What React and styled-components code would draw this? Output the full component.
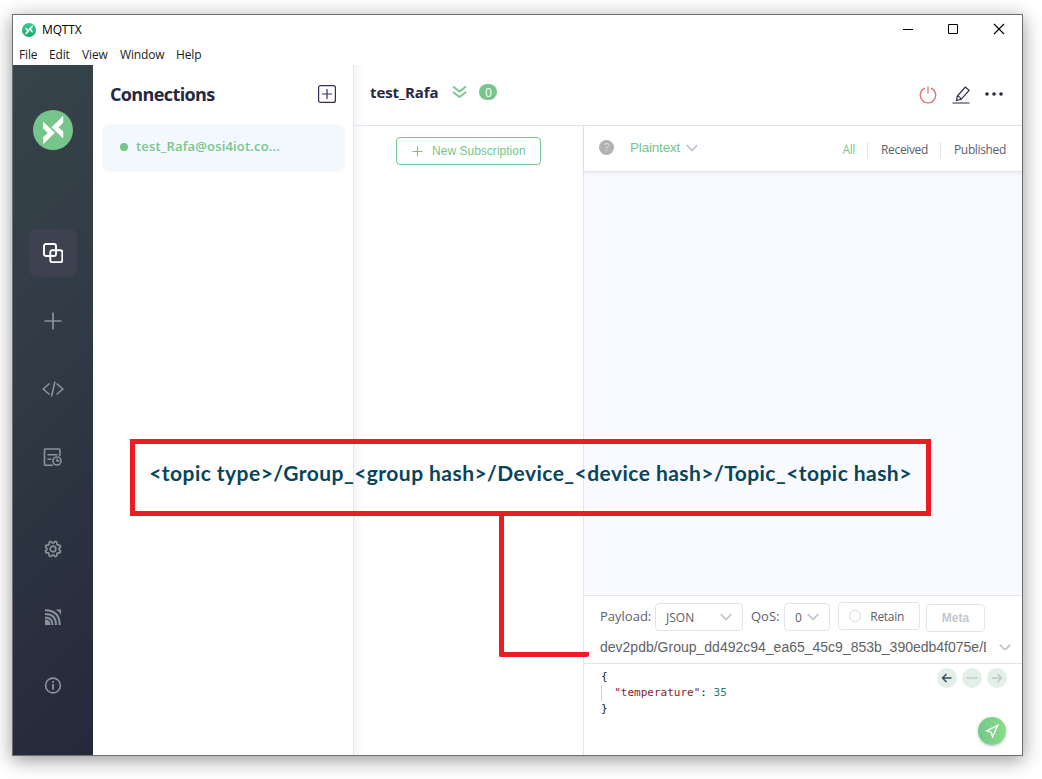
import React from 'react';
import styled, { createGlobalStyle } from 'styled-components';

const GlobalStyle = createGlobalStyle`
  * { box-sizing: border-box; }
  body { margin: 0; background: #fff; font-family: "Open Sans", "Noto Sans", sans-serif; overflow: hidden; }
  svg { display: block; flex: none; }
`;

const green = '#76c68c';
const line = '#e4e5ec';

const Desktop = styled.div`
  width: 1042px;
  height: 779px;
  padding: 14px 19px 23px 12px;
  background: #fff;
`;
const Window = styled.div`
  position: relative;
  width: 1011px;
  height: 742px;
  display: flex;
  flex-direction: column;
  border: 1px solid #6d6e70;
  background: #fff;
  box-shadow: 0 4px 18px rgba(0, 0, 0, 0.42);
`;
const TitleBar = styled.div`
  height: 29px;
  display: flex;
  align-items: center;
  padding: 0 17px 0 9px;
`;
const AppName = styled.span`
  flex: 1;
  margin-left: 6px;
  font-size: 12px;
  letter-spacing: -0.15px;
  color: #000;
`;
const WindowButtons = styled.div`
  display: flex;
  gap: 34px;
  margin-bottom: 2px;
`;
const MenuBar = styled.div`
  height: 21px;
  display: flex;
  align-items: center;
  gap: 12px;
  padding-left: 6px;
  font-size: 12px;
  line-height: 21px;
  color: #1c1c1c;
`;
const MenuItem = styled.span`
  width: ${(p) => p.$w}px;
  letter-spacing: -0.15px;
  white-space: nowrap;
`;
const Body = styled.div`
  flex: 1;
  min-height: 0;
  display: flex;
`;
const Sidebar = styled.nav`
  width: 80px;
  display: flex;
  flex-direction: column;
  align-items: center;
  padding-top: 45px;
  background: linear-gradient(135deg, #37444b 0%, #323c46 35%, #2c3340 65%, #25293a 100%);
`;
const NavGroup = styled.div`
  display: flex;
  flex-direction: column;
  gap: 20px;
  margin-top: ${(p) => p.$top}px;
`;
const NavItem = styled.div`
  width: 48px;
  height: 48px;
  display: grid;
  place-items: center;
  border-radius: 8px;
  color: ${(p) => (p.$active ? '#fff' : '#8b939b')};
  background: ${(p) => (p.$active ? '#3e4250' : 'transparent')};
`;
const Connections = styled.section`
  width: 260px;
  padding: 0 8px 0 9px;
`;
const ConnectionsHeader = styled.div`
  height: 59px;
  display: flex;
  align-items: center;
  justify-content: space-between;
  padding: 0 9px 1px 8px;
`;
const Heading = styled.h1`
  margin: 0;
  font-size: ${(p) => p.$size}px;
  letter-spacing: ${(p) => p.$ls}px;
  line-height: 24px;
  font-weight: 700;
  color: #262840;
`;
const ConnectionCard = styled.div`
  height: 48px;
  display: flex;
  align-items: center;
  gap: 8px;
  padding: 0 18px 4px;
  border-radius: 8px;
  background: #f2f8fd;
  font-size: 13px;
  font-weight: 600;
  letter-spacing: 0.17px;
  color: ${green};
`;
const StatusDot = styled.i`
  width: 8px;
  height: 8px;
  margin-top: 2px;
  border-radius: 50%;
  background: ${green};
`;
const Main = styled.main`
  flex: 1;
  min-width: 0;
  display: flex;
  flex-direction: column;
  border-left: 1px solid ${line};
  background: linear-gradient(90deg, #f4f5fa 0, #fff 9px);
`;
const MainHeader = styled.header`
  height: 61px;
  display: flex;
  align-items: center;
  padding: 0 19px 6px 16px;
  border-bottom: 1px solid ${line};
`;
const HeaderTitle = styled.div`
  display: flex;
  align-items: center;
  gap: 14px;
`;
const Count = styled.span`
  width: 18px;
  height: 16px;
  margin-left: 12px;
  border-radius: 8px;
  background: ${green};
  color: #fff;
  font: 12px/18px "Open Sans", sans-serif;
  text-align: center;
`;
const HeaderActions = styled.div`
  margin-left: auto;
  margin-top: 5px;
  display: flex;
  align-items: center;
  gap: 15px;
`;
const Workspace = styled.div`
  flex: 1;
  min-height: 0;
  display: flex;
`;
const Subscriptions = styled.section`
  width: 230px;
  padding: 11px 42px;
  border-right: 1px solid ${line};
`;
const SubscribeButton = styled.button`
  width: 145px;
  height: 28px;
  display: flex;
  align-items: center;
  gap: 9px;
  padding: 0 15px;
  border: 1px solid ${green};
  border-radius: 4px;
  background: #fff;
  font: 12px "Liberation Sans", sans-serif;
  letter-spacing: 0.02px;
  white-space: nowrap;
  color: ${green};
`;
const Panel = styled.section`
  flex: 1;
  min-width: 0;
  display: flex;
  flex-direction: column;
`;
const FilterBar = styled.div`
  height: 46px;
  display: flex;
  align-items: center;
  padding: 2px 16px 0 15px;
  border-bottom: 1px solid ${line};
  box-shadow: 0 1px 4px rgba(40, 45, 70, 0.08);
  background: #fff;
  z-index: 1;
`;
const Help = styled.span`
  width: 15px;
  height: 15px;
  margin-top: -4px;
  border-radius: 50%;
  background: #b2b2b2;
  color: #ddd;
  font: 10px/15px "Liberation Sans", sans-serif;
  text-align: center;
`;
const FormatSelect = styled.div`
  display: flex;
  align-items: center;
  gap: 6px;
  margin: -4px auto 0 16px;
  font: 13.5px "Liberation Sans", sans-serif;
  letter-spacing: -0.18px;
  color: ${green};
`;
const Filter = styled.span`
  padding-left: ${(p) => (p.$first ? 0 : 13)}px;
  margin-left: ${(p) => (p.$first ? 0 : 12)}px;
  border-left: ${(p) => (p.$first ? 'none' : '1px solid #e4e5ec')};
  font-size: 12px;
  line-height: 16px;
  letter-spacing: -0.35px;
  color: ${(p) => (p.$first ? green : '#5c5e66')};
`;
const Messages = styled.div`
  flex: 1;
  background: #f9faff;
`;
const Publisher = styled.div`
  height: 160px;
  display: flex;
  flex-direction: column;
  border-top: 1px solid ${line};
  background: #fff;
`;
const Options = styled.div`
  height: 42px;
  display: flex;
  align-items: center;
  padding-left: 16px;
  font-size: 13px;
  color: #5f6168;
`;
const Label = styled.span`
  width: ${(p) => p.$w}px;
  padding-bottom: 2px;
  white-space: nowrap;
`;
const Control = styled.div`
  width: ${(p) => p.$w}px;
  height: 28px;
  margin: ${(p) => p.$shift || 0}px ${(p) => p.$gap || 0}px 0 0;
  padding: 0 10px;
  display: flex;
  align-items: center;
  justify-content: ${(p) => (p.$center ? 'center' : 'space-between')};
  border: 1px solid #e2e3ec;
  border-radius: 4px;
  font-size: 12px;
  color: #5f6168;
`;
const RetainLabel = styled.span`
  margin-right: 5px;
  letter-spacing: -0.3px;
`;
const Meta = styled.span`
  font: bold 12px "Liberation Sans", sans-serif;
  color: #c5c7cf;
`;
const Radio = styled.i`
  width: 12px;
  height: 12px;
  border: 1px solid #dcdde6;
  border-radius: 50%;
`;
const TopicRow = styled.div`
  height: 26px;
  display: flex;
  align-items: flex-start;
  justify-content: space-between;
  padding: 0 11px 0 16px;
  border-bottom: 1px solid ${line};
`;
const Topic = styled.div`
  width: 386px;
  overflow: hidden;
  white-space: nowrap;
  font: 14px/18px "Liberation Sans", sans-serif;
  color: #606266;
`;
const Editor = styled.div`
  flex: 1;
  display: flex;
  justify-content: space-between;
  padding: 4px 15px 10px 17px;
`;
const Code = styled.div`
  font: 11px/16px "DejaVu Sans Mono", monospace;
  color: #1b1b1b;
  white-space: pre;
  padding-top: 1px;
`;
const CodeLine = styled.div`
  height: 16px;
  box-shadow: ${(p) => (p.$guide ? 'inset 1px 0 #d3d3d3' : 'none')};
  b { font-weight: 400; color: #8b1a2b; }
  i { font-style: normal; color: #2b8060; }
`;
const EditorActions = styled.div`
  display: flex;
  flex-direction: column;
  align-items: flex-end;
  justify-content: space-between;
`;
const History = styled.div`
  display: flex;
  gap: 5px;
`;
const RoundButton = styled.div`
  width: ${(p) => p.$size}px;
  height: ${(p) => p.$size}px;
  display: grid;
  place-items: center;
  border-radius: 50%;
  background: #e3efe7;
`;
const SendButton = styled(RoundButton)`
  margin-right: 1px;
  background: linear-gradient(90deg, #76c68c, #86de88);
  box-shadow: 0 1px 3px rgba(0, 0, 0, 0.25);
`;
const Callout = styled.div`
  position: absolute;
  left: 117px;
  top: 424px;
  width: 801px;
  height: 77px;
  display: flex;
  justify-content: center;
  border: 5px solid #ed1c24;
  font: bold 21px/58px Lato, sans-serif;
  letter-spacing: 0.45px;
  white-space: nowrap;
  color: #06455b;
  z-index: 3;
`;
const Connector = styled.div`
  position: absolute;
  left: 486px;
  top: 501px;
  width: 90px;
  height: 141px;
  border: solid #ed1c24;
  border-width: 0 0 5px 5px;
  border-radius: 0 0 2px 2px;
  z-index: 3;
`;

const Chevron = ({ w = 12, color = '#c0c4cc' }) => (
  <svg width={w} height="8" viewBox="0 0 12 8" fill="none" stroke={color} strokeWidth="1.7">
    <path d="M.8 1.2 6 6.6l5.2-5.4" />
  </svg>
);
const Logo = ({ size, from = green, to = green }) => (
  <svg width={size} height={size} viewBox="0 0 40 40">
    <defs>
      <linearGradient id={`logo${size}`} x1="0" y1="0" x2="0" y2="1">
        <stop stopColor={from} />
        <stop offset="1" stopColor={to} />
      </linearGradient>
    </defs>
    <circle cx="20" cy="20" r="20" fill={`url(#logo${size})`} />
    <path fill="#fff" d="M10 11.5 21.800 22.800 10.200 34.200v-7.200l4.600-4L10 18.200zM30.200 5.700 18.600 17.200l11.600 11.400v-7.100l-4.700-4.100 4.700-4.800z" />
  </svg>
);
const Stroke = ({ s = 20, w = 1.4, color = 'currentColor', children }) => (
  <svg width={s} height={s} viewBox={`0 0 ${s} ${s}`} fill="none" stroke={color} strokeWidth={w}>{children}</svg>
);
const gearPath = Array.from({ length: 64 }, (_, i) => {
  const a = (i / 64) * Math.PI * 2;
  const r = 7 + 0.9 * Math.tanh(2.2 * Math.cos(8 * a + Math.PI));
  return `${i ? 'L' : 'M'}${(10 + r * Math.cos(a)).toFixed(2)} ${(10 + r * Math.sin(a)).toFixed(2)}`;
}).join('') + 'Z';

export default function App() {
  return (
    <Desktop>
      <GlobalStyle />
      <Window>
        <TitleBar>
          <Logo size={14} from="#34cb96" to="#16a866" />
          <AppName>MQTTX</AppName>
          <WindowButtons>
            <Stroke s={12} w={1} color="#000"><path d="M2 6.5h10" /></Stroke>
            <Stroke s={12} w={1} color="#000"><path d="M1.5 1.5h9v9h-9z" /></Stroke>
            <Stroke s={12} w={1.1} color="#000"><path d="m1 1 10 10M11 1 1 11" /></Stroke>
          </WindowButtons>
        </TitleBar>
        <MenuBar>
          <MenuItem $w={18}>File</MenuItem>
          <MenuItem $w={21}>Edit</MenuItem>
          <MenuItem $w={26}>View</MenuItem>
          <MenuItem $w={44}>Window</MenuItem>
          <MenuItem $w={26}>Help</MenuItem>
        </MenuBar>
        <Body>
          <Sidebar>
            <Logo size={40} />
            <NavGroup $top={79}>
              <NavItem $active>
                <Stroke w={1.9}><rect x="1" y="1" width="12" height="12" rx="2" /><rect x="7.3" y="7.3" width="12" height="12" rx="2" /></Stroke>
              </NavItem>
              <NavItem><Stroke w={1.7}><path d="M10 1.5v17M1.5 10h17" /></Stroke></NavItem>
              <NavItem>
                <Stroke s={22} w={1.6}><path d="M7.5 5.5 1.2 11l6.3 5.5M14.5 5.5l6.3 5.5-6.3 5.5M13 3.5 9.5 18.5" /></Stroke>
              </NavItem>
              <NavItem>
                <Stroke w={1.6}>
                  <path d="M10 18.3H2.2q-.7 0-.7-.7V2.7q0-.7.7-.7h14q.7 0 .7.7v6.6M4.5 7.7h10M4.5 12.3h4" />
                  <circle cx="14" cy="14" r="4" /><path d="M14 11.7V14h2.5" />
                </Stroke>
              </NavItem>
            </NavGroup>
            <NavGroup $top={44}>
              <NavItem><Stroke w={1.7}><path d={gearPath} /><circle cx="10" cy="10" r="2.8" /></Stroke></NavItem>
              <NavItem>
                <Stroke w={2.1}>
                  <path d="M2 12.5q5.500 0 5.500 5.500H2z" fill="currentColor" stroke="none" />
                  <path d="M2 10.500Q9.500 10.500 9.500 18M2 7Q13 7 13 18M2 3.300Q16.700 3.300 16.700 18" />
                  <path d="M12.500 2.500H18V8q-1.800-3.800-5.500-5.500z" fill="currentColor" stroke="none" />
                </Stroke>
              </NavItem>
              <NavItem>
                <Stroke w={1.6}><circle cx="10" cy="10.500" r="7.400" /><path d="M10 9v5.800M10 6v1.800" strokeWidth="1.800" /></Stroke>
              </NavItem>
            </NavGroup>
          </Sidebar>

          <Connections>
            <ConnectionsHeader>
              <Heading $size={18} $ls={-0.62}>Connections</Heading>
              <Stroke s={18} w={1.2} color="#3c2a58"><rect x=".6" y=".6" width="16.800" height="16.800" rx="2" /><path d="M9 4v10M4 9h10" /></Stroke>
            </ConnectionsHeader>
            <ConnectionCard><StatusDot />test_Rafa@osi4iot.co...</ConnectionCard>
          </Connections>

          <Main>
            <MainHeader>
              <HeaderTitle>
                <Heading $size={15} $ls={-0.1}>test_Rafa</Heading>
                <svg width="15" height="14" viewBox="0 0 15 14" fill="none" stroke={green} strokeWidth="1.8">
                  <path d="m1 1.500 6.500 5L14 1.500M1 7l6.500 5L14 7" />
                </svg>
              </HeaderTitle>
              <Count>0</Count>
              <HeaderActions>
                <Stroke s={18} w={1.3} color="#dd7377"><path d="M5.800 2.200a7.700 7.700 0 1 0 6.400 0M9 .500v7" /></Stroke>
                <Stroke s={18} w={1.2} color="#262840"><path d="M.500 17h17M4.500 14.500 5.300 10l8-9 3.800 3.300-8 9zM5.300 10q2.800.500 3.800 3.300" /></Stroke>
                <svg width="18" height="18" fill="#262840"><circle cx="2" cy="8" r="1.800" /><circle cx="9" cy="8" r="1.800" /><circle cx="16" cy="8" r="1.800" /></svg>
              </HeaderActions>
            </MainHeader>
            <Workspace>
              <Subscriptions>
                <SubscribeButton>
                  <Stroke s={11} w={1.1}><path d="M5.500.500v10M.500 5.500h10" /></Stroke>
                  New Subscription
                </SubscribeButton>
              </Subscriptions>
              <Panel>
                <FilterBar>
                  <Help>?</Help>
                  <FormatSelect>Plaintext<Chevron /></FormatSelect>
                  <Filter $first>All</Filter>
                  <Filter>Received</Filter>
                  <Filter>Published</Filter>
                </FilterBar>
                <Messages />
                <Publisher>
                  <Options>
                    <Label $w={55}>Payload:</Label>
                    <Control $w={88} $gap={8}>JSON<Chevron /></Control>
                    <Label $w={33}>QoS:</Label>
                    <Control $w={46} $gap={8}>0<Chevron /></Control>
                    <Control $w={82} $gap={6} $shift={-2}><Radio /><RetainLabel>Retain</RetainLabel></Control>
                    <Control $w={59} $shift={2} $center><Meta>Meta</Meta></Control>
                  </Options>
                  <TopicRow>
                    <Topic>dev2pdb/Group_dd492c94_ea65_45c9_853b_390edb4f075e/Device</Topic>
                    <Stroke s={12} w={1.7} color="#c0c4cc"><path d="m.800 7.700 5.200 5.400 5.200-5.400" transform="translate(0 -1)" /></Stroke>
                  </TopicRow>
                  <Editor>
                    <Code>
                      <CodeLine>{'{'}</CodeLine>
                      <CodeLine $guide>{'  '}<b>"temperature"</b>: <i>35</i></CodeLine>
                      <CodeLine>{'}'}</CodeLine>
                    </Code>
                    <EditorActions>
                      <History>
                        <RoundButton $size={20}><Stroke s={12} color="#344a60"><path d="M10.500 6H1.500M5.500 2l-4 4 4 4" /></Stroke></RoundButton>
                        <RoundButton $size={20}><Stroke s={12} w={1.2} color="#c0c4cc"><path d="M.500 6h11" /></Stroke></RoundButton>
                        <RoundButton $size={20}><Stroke s={12} w={1.5} color="#bfc6c9"><path d="M1 6h9.500M6.500 2l4 4-4 4" /></Stroke></RoundButton>
                      </History>
                      <SendButton $size={28}>
                        <Stroke s={14} w={1.4} color="#fff"><path d="M12.700 1.300 1.500 6.800 6 8.200l1.700 4.600z" /></Stroke>
                      </SendButton>
                    </EditorActions>
                  </Editor>
                </Publisher>
              </Panel>
            </Workspace>
          </Main>
        </Body>
        <Callout>{'<topic type>/Group_<group hash>/Device_<device hash>/Topic_<topic hash>'}</Callout>
        <Connector />
      </Window>
    </Desktop>
  );
}
